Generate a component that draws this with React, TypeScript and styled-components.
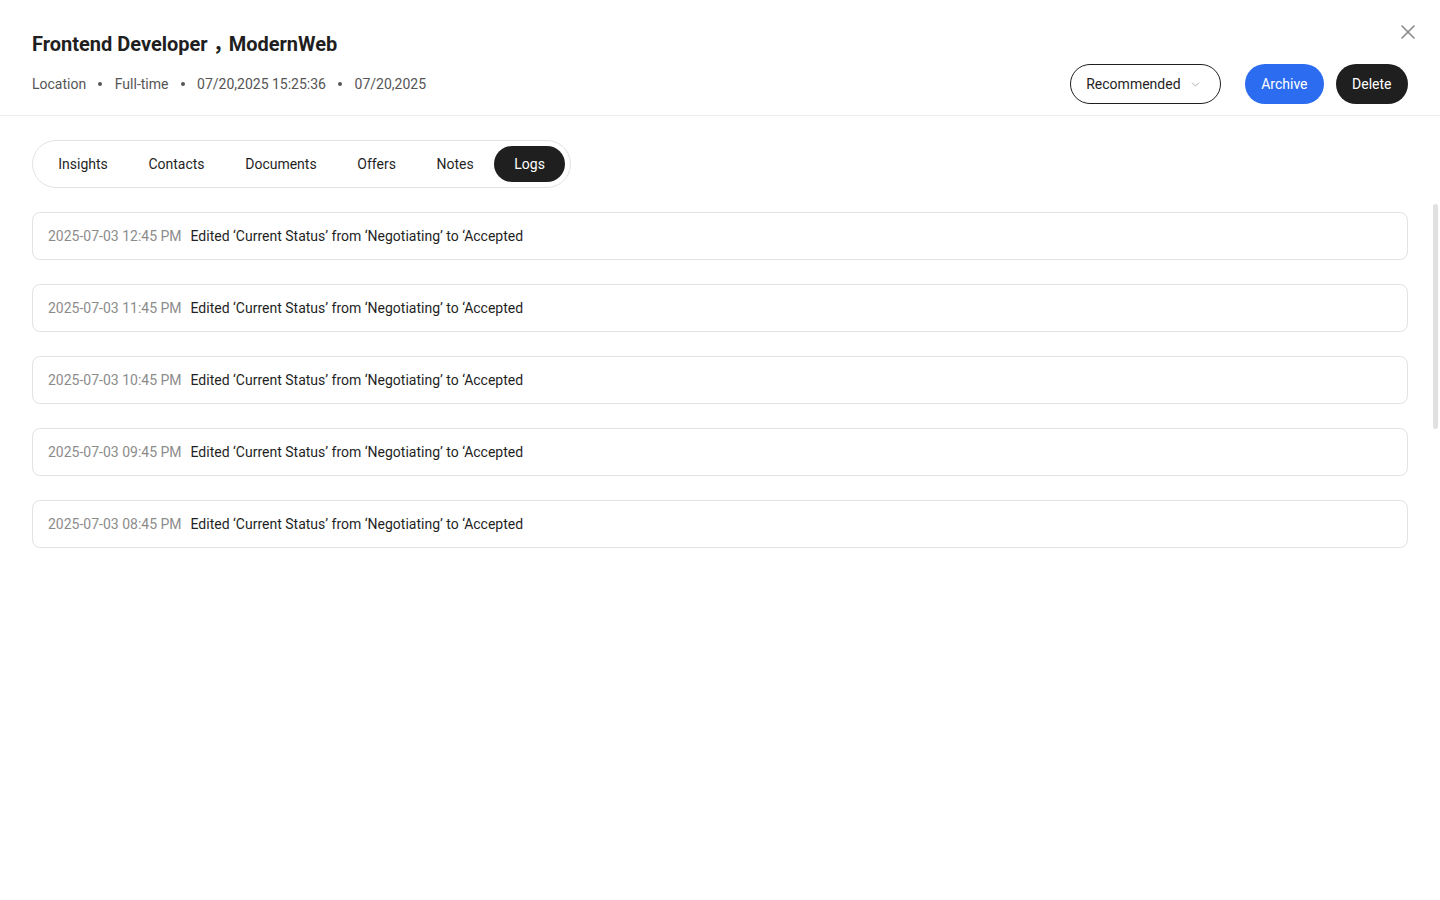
import React from "react";
import styled, { createGlobalStyle } from "styled-components";
import { ChevronDown, X } from "lucide-react";

const Global = createGlobalStyle`
  html, body { margin: 0; padding: 0; background: #fff; }
  body { font-family: Roboto, "Noto Sans CJK SC", "Noto Sans", Arial, sans-serif; color: #1f1f1f; }
  * { box-sizing: border-box; }
`;

const Page = styled.div`
  position: relative;
  width: 1440px;
  height: 900px;
  overflow: hidden;
  background: #fff;
`;

const Header = styled.header`
  padding: 30px 32px 11px;
  border-bottom: 1px solid #ececec;
`;

const Title = styled.h1`
  margin: 0;
  font-size: 20px;
  line-height: 28px;
  font-weight: 700;
  color: #1f1f1f;
  font-family: Roboto, "Noto Sans CJK SC", sans-serif;
`;

const Comma = styled.span`
  letter-spacing: -4px;
`;

const HeaderRow = styled.div`
  margin-top: 6px;
  display: flex;
  align-items: center;
  justify-content: space-between;
  height: 40px;
`;

const Meta = styled.div`
  display: flex;
  align-items: center;
  gap: 12px;
  font-size: 14px;
  color: #555;
`;

const Dot = styled.span`
  width: 4px;
  height: 4px;
  margin: 0 0.3px;
  border-radius: 50%;
  background: #555;
`;

const Actions = styled.div`
  display: flex;
  align-items: center;
`;

const Select = styled.button`
  height: 40px;
  width: 151px;
  padding: 0 16px 0 15px;
  border: 1px solid #1f1f1f;
  border-radius: 20px;
  background: #fff;
  display: flex;
  align-items: center;
  justify-content: space-between;
  font-family: inherit;
  font-size: 14px;
  color: #1f1f1f;
  margin-right: 24px;
  svg { color: #999; margin-right: 2px; }
`;

const Btn = styled.button<{ $variant: "primary" | "dark" }>`
  height: 40px;
  padding: 0 ${(p) => (p.$variant === "primary" ? "16px" : "16.5px")};
  border: none;
  border-radius: 20px;
  font-family: inherit;
  font-size: 14px;
  color: #fff;
  background: ${(p) => (p.$variant === "primary" ? "#2b6cf0" : "#1f1f1f")};
  & + & { margin-left: 12px; }
`;

const Close = styled.button`
  position: absolute;
  top: 20px;
  right: 20px;
  width: 24px;
  height: 24px;
  padding: 0;
  border: none;
  background: none;
  color: #8a8a8a;
  display: flex;
  align-items: center;
  justify-content: center;
`;

const Body = styled.main`
  padding: 24px 32px;
  display: flex;
  flex-direction: column;
  align-items: flex-start;
  gap: 24px;
`;

const Tabs = styled.nav`
  display: flex;
  padding: 5px;
  border: 1px solid #e3e3e3;
  border-radius: 24px;
`;

const Tab = styled.div<{ $active?: boolean }>`
  height: 36px;
  padding: 0 20.3px;
  display: flex;
  align-items: center;
  border-radius: 18px;
  font-size: 14px;
  color: ${(p) => (p.$active ? "#fff" : "#1f1f1f")};
  background: ${(p) => (p.$active ? "#1f1f1f" : "transparent")};
`;

const LogList = styled.div`
  align-self: stretch;
  display: flex;
  flex-direction: column;
  gap: 24px;
`;

const LogRow = styled.div`
  height: 48px;
  padding: 0 15px;
  display: flex;
  align-items: center;
  gap: 9px;
  border: 1px solid #e3e3e3;
  border-radius: 8px;
  font-size: 14px;
`;

const Time = styled.span`
  color: #8c8c8c;
`;

const Msg = styled.span`
  color: #1f1f1f;
`;

const Thumb = styled.div`
  position: absolute;
  top: 204px;
  right: 2px;
  width: 5px;
  height: 225px;
  border-radius: 3px;
  background: #e0e0e0;
`;

const tabs = ["Insights", "Contacts", "Documents", "Offers", "Notes", "Logs"];
const times = [
  "2025-07-03 12:45 PM",
  "2025-07-03 11:45 PM",
  "2025-07-03 10:45 PM",
  "2025-07-03 09:45 PM",
  "2025-07-03 08:45 PM",
];

export default function App() {
  return (
    <Page>
      <Global />
      <Header>
        <Title>
          Frontend Developer <Comma>，</Comma>ModernWeb
        </Title>
        <HeaderRow>
          <Meta>
            <span>Location</span>
            <Dot />
            <span>Full-time</span>
            <Dot />
            <span>07/20,2025 15:25:36</span>
            <Dot />
            <span>07/20,2025</span>
          </Meta>
          <Actions>
            <Select>
              Recommended
              <ChevronDown size={13} strokeWidth={1.5} />
            </Select>
            <Btn $variant="primary">Archive</Btn>
            <Btn $variant="dark">Delete</Btn>
          </Actions>
        </HeaderRow>
      </Header>
      <Close aria-label="Close">
        <X size={24} strokeWidth={1.6} />
      </Close>
      <Body>
        <Tabs>
          {tabs.map((t) => (
            <Tab key={t} $active={t === "Logs"}>
              {t}
            </Tab>
          ))}
        </Tabs>
        <LogList>
          {times.map((t) => (
            <LogRow key={t}>
              <Time>{t}</Time>
              <Msg>Edited ‘Current Status’ from ‘Negotiating’ to ‘Accepted</Msg>
            </LogRow>
          ))}
        </LogList>
      </Body>
      <Thumb />
    </Page>
  );
}
